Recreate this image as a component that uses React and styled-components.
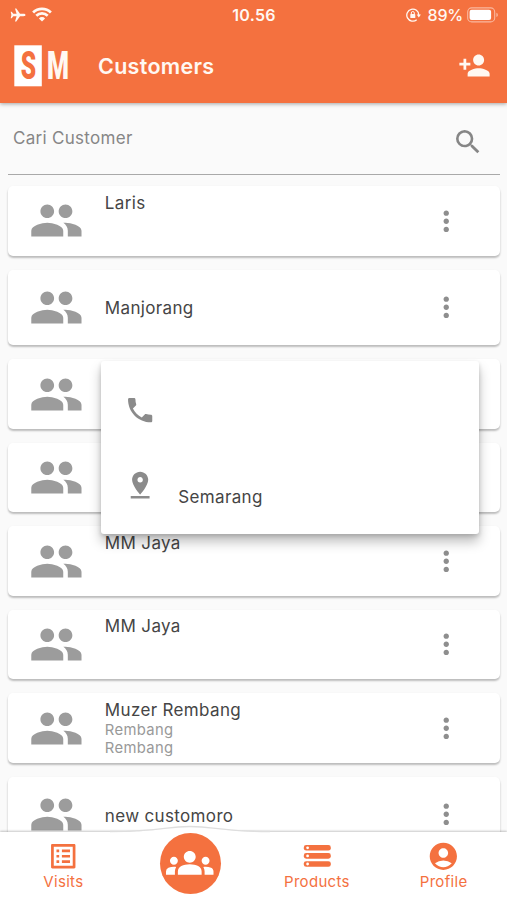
import React from "react";
import styled, { createGlobalStyle } from "styled-components";
import {
  MdPeople, MdPersonAdd, MdSearch, MdMoreVert, MdPhone, MdPinDrop,
  MdListAlt, MdGroups, MdAccountCircle,
} from "react-icons/md";

const ORANGE = "#f4713f";

const GlobalStyle = createGlobalStyle`
  * { box-sizing: border-box; }
  body { margin: 0; background: #fafafa; font-family: Inter, "Liberation Sans", sans-serif; }
  svg { display: block; flex: none; }
`;

const Screen = styled.div`
  position: relative;
  display: flex;
  flex-direction: column;
  width: 507px;
  height: 900px;
  overflow: hidden;
  background: #fafafa;
`;

const Header = styled.header`
  position: relative;
  z-index: 1;
  height: 103px;
  flex: none;
  background: ${ORANGE};
  color: #fff8f2;
  box-shadow: 0 1px 4px rgba(0, 0, 0, 0.35);
`;

const StatusBar = styled.div`
  display: grid;
  grid-template-columns: 1fr auto 1fr;
  align-items: center;
  height: 29px;
  padding: 0 9px 0 10px;
`;

const StatusGroup = styled.div`
  display: flex;
  align-items: center;
  justify-content: ${(p) => (p.$end ? "flex-end" : "flex-start")};
  gap: ${(p) => (p.$end ? 5 : 6)}px;
`;

const Clock = styled.span`
  font-size: 16px;
  font-weight: 600;
  letter-spacing: 0.3px;
`;

const Percent = styled.span`
  font-size: 16px;
  font-weight: 500;
  letter-spacing: -0.2px;
  margin: 0 -1px 0 2px;
`;

const AppBar = styled.div`
  display: flex;
  align-items: center;
  height: 73px;
  padding: 0 16px 0 14px;
`;

const Title = styled.h1`
  flex: 1;
  margin: 0 0 0 29px;
  font-size: 21.5px;
  line-height: 28px;
  font-weight: 600;
  letter-spacing: 0.3px;
`;

const SearchBar = styled.div`
  display: flex;
  align-items: center;
  justify-content: space-between;
  flex: none;
  height: 72px;
  margin: 0 7px 0 8px;
  padding: 6px 16px 0 5px;
  border-bottom: 1.5px solid #a9a9a9;
  color: #868686;
`;

const SearchText = styled.span`
  font-size: 17px;
  line-height: 24px;
  letter-spacing: 0.3px;
  margin-bottom: 8px;
`;

const List = styled.main`
  display: flex;
  flex-direction: column;
  gap: 14px;
  flex: 1;
  min-height: 0;
  overflow: hidden;
  padding: 11px 7px 0 8px;
`;

const Card = styled.article`
  display: flex;
  align-items: center;
  flex: none;
  height: ${(p) => (p.$tall ? 75.7 : 69.5)}px;
  padding: 0 38px 0 21px;
  border-radius: 5px;
  background: #fff;
  color: #9c9c9c;
  box-shadow: 0 2px 2px rgba(0, 0, 0, 0.22), 0 1px 3px rgba(0, 0, 0, 0.06);
`;

const Details = styled.div`
  flex: 1;
  margin-left: 21px;
  min-height: ${(p) => (p.$single ? 0 : 60)}px;
  padding-top: ${(p) => (p.$single ? 2 : 1)}px;
`;

const Name = styled.div`
  font-size: 17px;
  line-height: 22px;
  letter-spacing: 0.35px;
  color: #454545;
`;

const Line = styled.div`
  font-size: 14.8px;
  line-height: 18.8px;
  letter-spacing: 0.35px;
  color: #999;
`;

const Popup = styled.div`
  position: absolute;
  z-index: 2;
  left: 101px;
  top: 361px;
  width: 377.5px;
  height: 173px;
  padding: 33px 23px 0;
  border-radius: 3px;
  background: #fff;
  color: #8b8b8b;
  box-shadow: 0 8px 12px rgba(0, 0, 0, 0.25), 0 2px 4px rgba(0, 0, 0, 0.16);
`;

const PopupRow = styled.div`
  display: flex;
  align-items: center;
  height: 32px;
  margin-bottom: 43px;
`;

const Place = styled(Name)`
  margin: 24px 0 0 22px;
`;

const Nav = styled.nav`
  position: relative;
  z-index: 1;
  display: grid;
  grid-template-columns: repeat(4, 1fr);
  height: 68px;
  flex: none;
  background: #fff;
  color: ${ORANGE};
  box-shadow: 0 -1px 2px rgba(0, 0, 0, 0.22);
`;

const Hump = styled.svg`
  position: absolute;
  left: 110px;
  top: -7px;
`;

const NavItem = styled.div`
  position: relative;
  display: flex;
  flex-direction: column;
  align-items: center;
  padding-top: 7.5px;
`;

const NavLabel = styled.span`
  font-size: 15px;
  line-height: 20px;
  letter-spacing: 0.3px;
`;

const ActiveCircle = styled.div`
  display: flex;
  align-items: center;
  justify-content: center;
  width: 61px;
  height: 61px;
  margin-top: -7px;
  border-radius: 50%;
  background: ${ORANGE};
  color: #fff;
`;

const LogoMark = styled.svg`
  overflow: visible;
`;

const Plane = () => (
  <svg width="16" height="14" viewBox="0 0 16 14" fill="currentColor">
    <path d="M15.5 7c0 .8-1 1.2-2 1.2H10L6.3 13.4H5L6.6 8.2H3.3L1.7 10.2H.7L1.4 7 .7 3.8h1l1.6 2h3.3L5 .6h1.3L10 5.8h3.5c1 0 2 .4 2 1.2z" />
  </svg>
);

const Wifi = () => (
  <svg width="20" height="15" viewBox="0 0 20 15" fill="none" stroke="currentColor" strokeWidth="2.7">
    <path d="M1.1 5.5a12.6 12.6 0 0 1 17.8 0M4.3 8.7a8.1 8.1 0 0 1 11.4 0" />
    <path d="M10 14.5 6.9 11.4a4.4 4.4 0 0 1 6.2 0z" fill="currentColor" stroke="none" />
  </svg>
);

const RotationLock = () => (
  <svg width="15" height="14" viewBox="0 0 15 14" fill="none" stroke="currentColor" strokeWidth="1.3">
    <path d="M10.7 11.7A6 6 0 1 1 12.8 7" />
    <path d="M10.7 6.6h4.2L12.8 9.4z" fill="currentColor" stroke="none" />
    <rect x="4.3" y="6.1" width="5" height="4" rx=".6" fill="currentColor" stroke="none" />
    <path d="M5.3 6.3V5a1.5 1.5 0 0 1 3 0v1.3" strokeWidth="1" />
  </svg>
);

const Battery = () => (
  <svg width="31" height="16" viewBox="0 0 31 16">
    <rect x=".7" y=".9" width="27" height="14" rx="4" fill="none" stroke="#fff" strokeOpacity=".5" strokeWidth="1.1" />
    <rect x="2.6" y="2.8" width="21.5" height="10.2" rx="2" fill="#fff" />
    <path d="M29.4 5.7q1.5.6 1.5 2.2t-1.5 2.2z" fill="#fff" fillOpacity=".5" />
  </svg>
);

const Logo = () => (
  <LogoMark width="55" height="42" viewBox="0 0 55 42" fontFamily="Roboto, sans-serif" fontWeight="900" fontSize="39">
    <rect x=".3" y=".3" width="27.5" height="41" fill="#fff" />
    <text x="6.8" y="34.3" textLength="15.4" lengthAdjust="spacingAndGlyphs" fill={ORANGE}>S</text>
    <text x="33" y="34.3" textLength="22" lengthAdjust="spacingAndGlyphs" fill="#fff8f2">M</text>
  </LogoMark>
);

const Servers = () => (
  <svg width="32.5" height="32.5" viewBox="0 0 32.5 32.5" fill="currentColor">
    {[5, 13.1, 21.2].map((y) => (
      <g key={y}>
        <rect x="2.8" y={y} width="27" height="5.6" rx="2.4" />
        <circle cx="6.6" cy={y + 2.8} r="1.4" fill="#fff" />
      </g>
    ))}
  </svg>
);

const customers = [
  { name: "Laris", lines: [] },
  { name: "Manjorang" },
  { name: "", lines: [] },
  { name: "", lines: [] },
  { name: "MM Jaya", lines: [] },
  { name: "MM Jaya", lines: [] },
  { name: "Muzer Rembang", lines: ["Rembang", "Rembang"] },
  { name: "new customoro" },
];

function CustomerCard({ name, lines }) {
  return (
    <Card $tall={!lines}>
      <MdPeople size={54.8} />
      <Details $single={!lines}>
        <Name>{name}</Name>
        {lines?.map((line, i) => <Line key={i}>{line}</Line>)}
      </Details>
      <MdMoreVert size={32.5} color="#8e8e8e" />
    </Card>
  );
}

export default function App() {
  return (
    <Screen>
      <GlobalStyle />
      <Header>
        <StatusBar>
          <StatusGroup><Plane /><Wifi /></StatusGroup>
          <Clock>10.56</Clock>
          <StatusGroup $end><RotationLock /><Percent>89%</Percent><Battery /></StatusGroup>
        </StatusBar>
        <AppBar>
          <Logo />
          <Title>Customers</Title>
          <MdPersonAdd size={33} />
        </AppBar>
      </Header>
      <SearchBar>
        <SearchText>Cari Customer</SearchText>
        <MdSearch size={32} />
      </SearchBar>
      <List>
        {customers.map((c, i) => <CustomerCard key={i} {...c} />)}
      </List>
      <Popup>
        <PopupRow><MdPhone size={32.3} /></PopupRow>
        <PopupRow><MdPinDrop size={32.3} /><Place>Semarang</Place></PopupRow>
      </Popup>
      <Nav>
        <Hump width="160" height="10" viewBox="0 0 160 10">
          <path d="M0 7C28 7 42 5.5 57 3.6Q80 .4 103 3.6C118 5.5 132 7 160 7V10H0z" fill="#fff" />
          <path d="M0 6.5C28 6.5 42 5 57 3.1Q80 -.1 103 3.1C118 5 132 6.5 160 6.5" fill="none" stroke="#dedede" strokeWidth="1.4" />
        </Hump>
        <NavItem><MdListAlt size={32.5} /><NavLabel>Visits</NavLabel></NavItem>
        <NavItem><ActiveCircle><MdGroups size={47.5} /></ActiveCircle></NavItem>
        <NavItem><Servers /><NavLabel>Products</NavLabel></NavItem>
        <NavItem><MdAccountCircle size={32.7} /><NavLabel>Profile</NavLabel></NavItem>
      </Nav>
    </Screen>
  );
}
